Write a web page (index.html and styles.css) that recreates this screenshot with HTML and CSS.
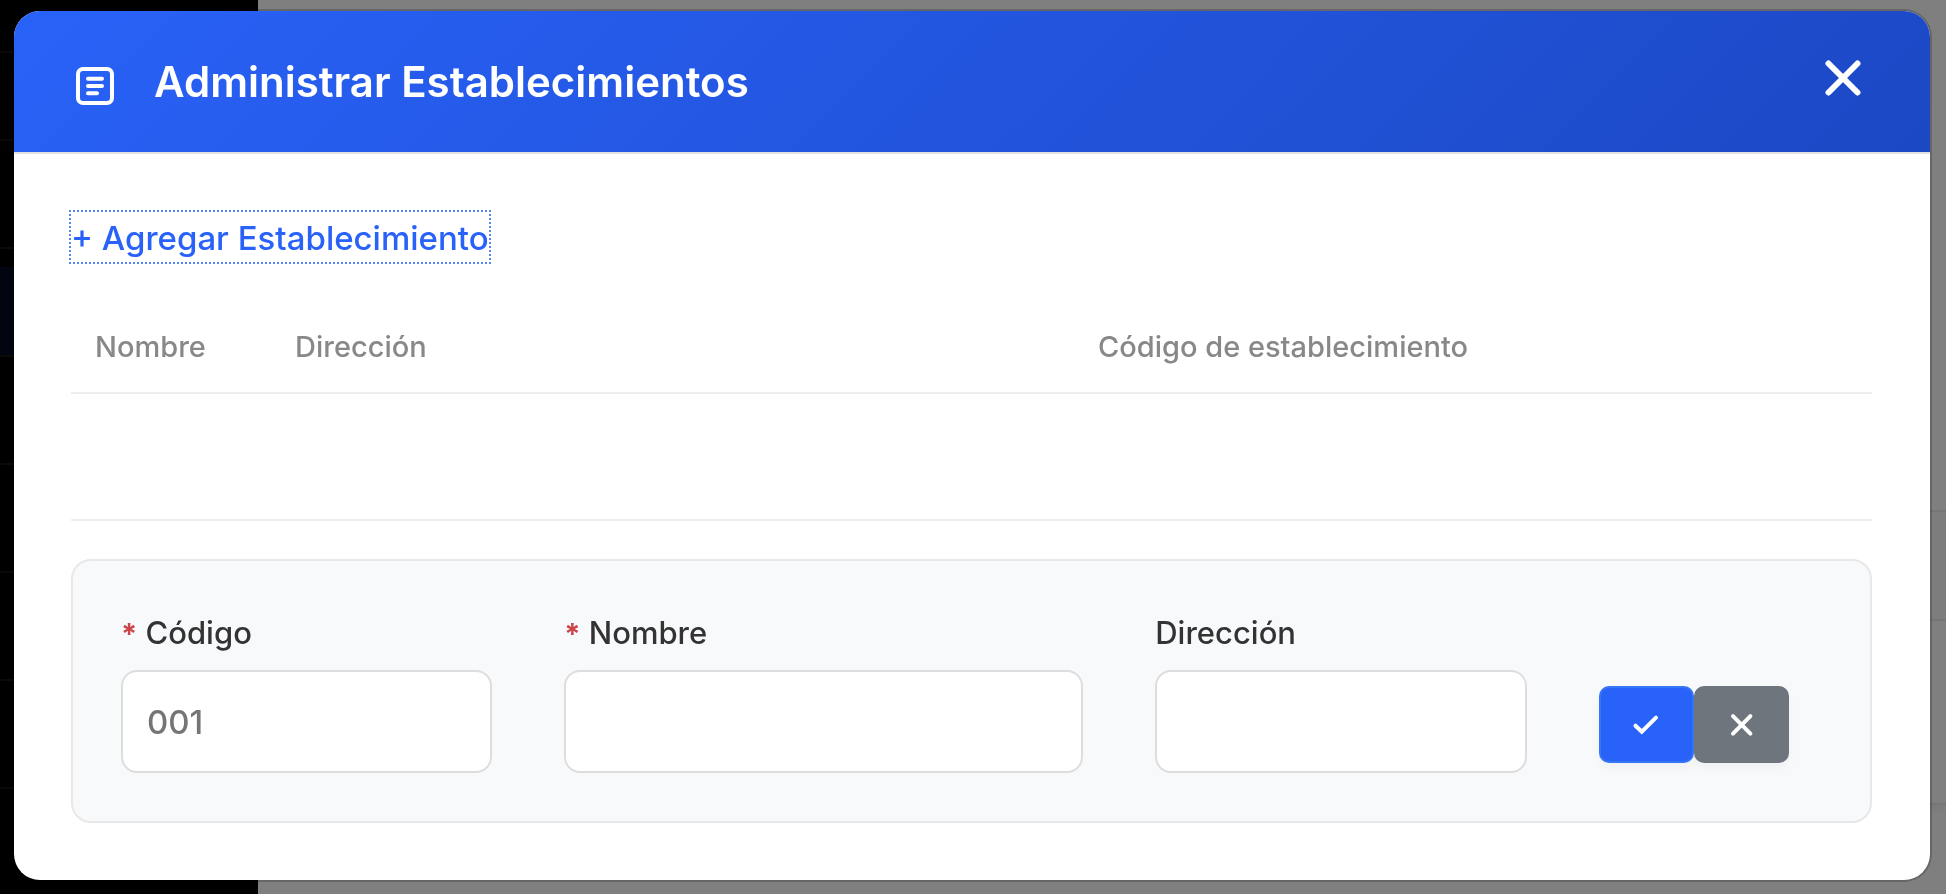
FILE: index.html
```html
<!DOCTYPE html>
<html lang="es">
<head>
<meta charset="utf-8">
<meta name="viewport" content="width=device-width, initial-scale=1">
<title>Administrar Establecimientos</title>
<link rel="stylesheet" href="styles.css">
</head>
<body>
<div class="app" aria-hidden="true">
  <div class="sidebar">
    <div class="side-brand"></div>
    <div class="side-user"></div>
    <div class="side-item"></div>
    <div class="side-item side-item-active"></div>
    <div class="side-item"></div>
    <div class="side-item"></div>
    <div class="side-item"></div>
    <div class="side-item"></div>
    <div class="side-item"></div>
  </div>
  <div class="content">
    <div class="panel">
      <div class="panel-head"></div>
      <div class="panel-row"></div>
      <div class="panel-body"></div>
    </div>
  </div>
</div>

<div class="backdrop">
  <section class="modal" role="dialog" aria-modal="true" aria-labelledby="modal-title">
    <header class="modal-header">
      <svg class="header-icon" viewBox="0 0 38 38" aria-hidden="true">
        <rect x="2" y="2" width="34" height="34" rx="5"/>
        <path d="M12 11.7h14M12 19h14M12 26.2h9"/>
      </svg>
      <h1 class="modal-title" id="modal-title">Administrar Establecimientos</h1>
      <button class="close" type="button" aria-label="Cerrar">
        <svg viewBox="0 0 36 36" aria-hidden="true"><path d="M3.500 3.500l29 29M32.500 3.500l-29 29"/></svg>
      </button>
    </header>

    <div class="modal-body">
      <a class="add-link" href="#form">+ Agregar Establecimiento</a>

      <table class="list">
        <colgroup><col class="col-name"><col class="col-address"><col></colgroup>
        <thead>
          <tr><th scope="col">Nombre</th><th scope="col">Dirección</th><th scope="col">Código de establecimiento</th></tr>
        </thead>
        <tbody>
          <tr><td colspan="3"></td></tr>
        </tbody>
      </table>

      <form class="form" id="form">
        <div class="field">
          <label for="codigo"><span class="required">*</span> Código</label>
          <input id="codigo" type="text" placeholder="001" required>
        </div>
        <div class="field field-wide">
          <label for="nombre"><span class="required">*</span> Nombre</label>
          <input id="nombre" type="text" required>
        </div>
        <div class="field">
          <label for="direccion">Dirección</label>
          <input id="direccion" type="text">
        </div>
        <div class="actions">
          <button class="btn btn-primary" type="submit" aria-label="Guardar">
            <svg viewBox="0 0 28 24" aria-hidden="true"><path d="M3.500 12.700l6.300 6L24 4.700"/></svg>
          </button>
          <button class="btn btn-secondary" type="button" aria-label="Cancelar">
            <svg viewBox="0 0 28 24" aria-hidden="true"><path d="M6 3.200l17.400 17.400M23.400 3.200L6 20.600"/></svg>
          </button>
        </div>
      </form>
    </div>
  </section>
</div>
</body>
</html>
```
FILE: styles.css
```css
* {
  box-sizing: border-box;
}

body {
  margin: 0;
  font-family: Inter, "Liberation Sans", sans-serif;
  font-size: 31px;
  color: #333;
  background: #fff;
  overflow: hidden;
}

.app {
  display: flex;
  height: 100vh;
  overflow: hidden;
}

.sidebar {
  flex: 0 0 258px;
  background: #000;
}

.sidebar > div {
  border-bottom: 2px solid #141414;
}

.side-brand {
  height: 53px;
}

.side-user {
  height: 88px;
}

.side-item {
  height: 108px;
}

.side-item-active {
  background: linear-gradient(#000 18px, #000a20 18px);
}

.content {
  flex: 1;
  padding-top: 400px;
}

.panel {
  box-shadow: 0 4px 8px rgba(0, 0, 0, 0.06);
}

.panel > div {
  border-bottom: 2px solid #ececec;
}

.panel-head {
  height: 112px;
}

.panel-row {
  height: 109px;
  background: #fafafa;
}

.panel-body {
  height: 184px;
}

.backdrop {
  position: fixed;
  inset: 0;
  padding: 11px 16px 14px 14px;
  background: rgba(0, 0, 0, 0.5);
}

.modal {
  border-radius: 26px;
  background: #fff;
  box-shadow: 0 0 0 2px rgba(0, 0, 0, 0.2);
  overflow: hidden;
}

.modal-header {
  display: flex;
  align-items: center;
  height: 143px;
  padding: 0 62px;
  border-bottom: 2px solid #e2e2e4;
  background: linear-gradient(135deg, #2962f8 0%, #1c48c4 100%) padding-box;
  color: #fff;
}

.modal-header svg,
.btn svg {
  display: block;
  fill: none;
  stroke: currentColor;
  stroke-linecap: round;
}

.header-icon {
  width: 38px;
  height: 38px;
  margin-top: 8px;
  stroke-width: 4;
}

.modal-title {
  flex: 1;
  margin: 0 0 0 40px;
  font-size: 42px;
  font-weight: 600;
  line-height: 56px;
}

.close {
  margin: 0 7px 8px 0;
  padding: 0;
  border: 0;
  background: none;
  color: inherit;
}

.close svg {
  width: 36px;
  height: 36px;
  stroke-width: 6;
}

.modal-body {
  padding: 58px 58px 57px 57px;
}

.add-link {
  display: inline-block;
  padding-top: 2px;
  line-height: 48px;
  font-size: 33px;
  font-weight: 500;
  color: #2962f8;
  text-decoration: none;
  outline: 2px dotted #5583fa;
  vertical-align: top;
}

.list {
  width: 100%;
  margin-top: 40px;
  border-collapse: separate;
  border-spacing: 0;
  table-layout: fixed;
}

.col-name {
  width: 200px;
}

.col-address {
  width: 803px;
}

.list th,
.list td {
  padding: 0 24px;
  border-bottom: 2px solid #eee;
  text-align: left;
}

.list th {
  height: 92px;
  padding-bottom: 2px;
  font-size: 29px;
  font-weight: 500;
  color: #888;
}

.list td {
  height: 127px;
}

.form {
  display: grid;
  grid-template-columns: repeat(12, 1fr);
  gap: 72px;
  margin-top: 38px;
  padding: 48px;
  border: 2px solid #e8e8e8;
  border-radius: 20px;
  background: #f8f9fb;
}

.field {
  grid-column: span 3;
  display: flex;
  flex-direction: column;
  gap: 13px;
}

.field-wide {
  grid-column: span 4;
}

.field label {
  font-weight: 500;
  line-height: 48px;
}

.required {
  font-size: 29px;
  font-weight: 700;
  line-height: 1;
  color: #cb444a;
}

.field input {
  width: 100%;
  height: 103px;
  padding: 0 24px;
  border: 2px solid #ddd;
  border-radius: 16px;
  background: #fff;
  font: inherit;
  font-size: 33px;
  font-weight: 500;
  color: #333;
}

.field input::placeholder {
  color: #757575;
  opacity: 1;
}

.actions {
  grid-column: span 2;
  display: flex;
  align-self: end;
  margin-bottom: 10px;
}

.btn {
  display: flex;
  align-items: center;
  justify-content: center;
  width: 95px;
  height: 77px;
  padding: 0;
  border: 2px solid;
  border-radius: 10px;
  box-shadow: 0 6px 8px rgba(0, 0, 0, 0.03);
}

.btn svg {
  width: 28px;
  height: 24px;
  stroke: #fff;
  stroke-width: 4;
}

.btn-primary {
  border-color: #3576f6;
  background: #2962f8;
}

.btn-secondary {
  border-color: #6e757d;
  background: #6e757d;
}
```
